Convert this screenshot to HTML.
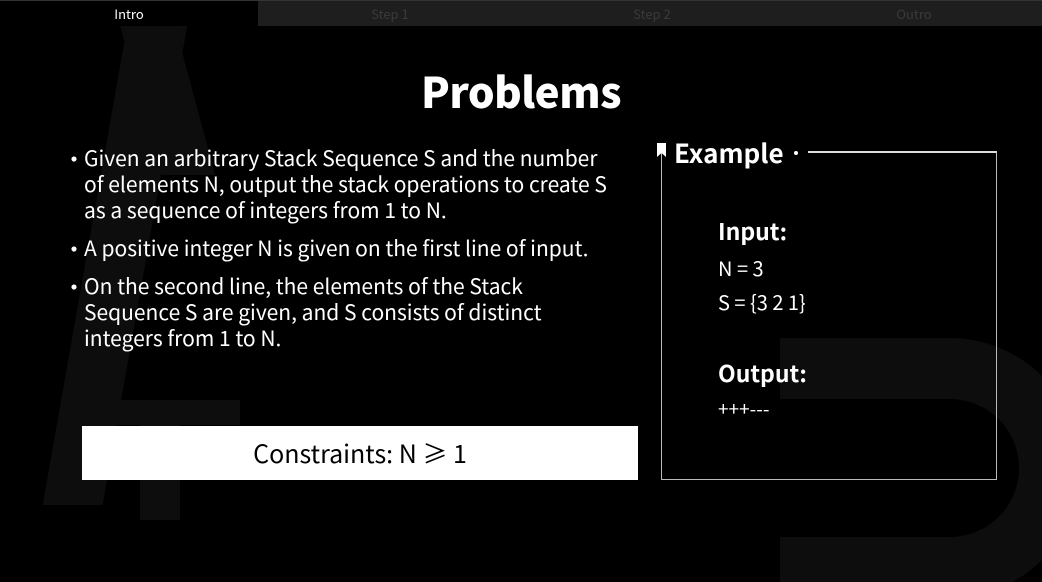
<!DOCTYPE html>
<html style="width:1042px;height:582px;overflow:hidden"><head><style>
*{margin:0;padding:0;box-sizing:border-box}
body{width:1042px;height:582px;background:#000;overflow:hidden;position:relative;font-family:"Liberation Sans","Noto Sans CJK SC",sans-serif;color:#fff}
.tabs{position:absolute;top:0;left:0;width:1042px;height:26px;background:#1e1e1e;border-top:1px solid #333}
.tab{position:absolute;top:0;height:25px;line-height:25px;font-size:13px;text-align:center;width:260px;color:#3a3a3a;font-family:"Noto Sans CJK SC",sans-serif}
.bg{position:absolute;background:#0d0d0d}
h1{position:absolute;top:60px;left:0;width:1042px;text-align:center;font-size:42px;font-weight:900;font-family:"Noto Sans CJK SC","Liberation Sans",sans-serif;letter-spacing:-0.5px}
ul{position:absolute;left:62px;top:145px;width:570px;list-style:none;font-family:"Noto Sans CJK SC",sans-serif;font-size:21px;line-height:26px}
li{position:relative;padding-left:22px;margin-bottom:12px}
li:before{content:"•";position:absolute;left:0;font-size:24px}
.cons{position:absolute;left:82px;top:426px;width:556px;height:54px;background:#fff;color:#000;text-align:center;line-height:54px;font-size:25px;font-family:"Noto Sans CJK SC",sans-serif}
.box{position:absolute;left:661px;top:151px;width:336px;height:329px;border:1.5px solid #bbb;border-top:none}
.ex{position:absolute;font-family:"Noto Sans CJK SC",sans-serif}
.clip{position:absolute;left:0;top:0;width:1042px;height:582px;overflow:hidden}
</style></head><body>
<div class="clip">
<div class="bg" style="top:25px;width:60px;height:480px;transform:skewX(-10deg);left:85px"></div>
<div class="bg" style="left:140px;top:25px;width:55px;height:150px;transform:skewX(15deg)"></div>
<div class="bg" style="left:65px;top:400px;width:175px;height:25px"></div>
<div class="bg" style="left:140px;top:420px;width:40px;height:100px"></div>
<div style="position:absolute;left:780px;top:338px;width:300px;height:260px;border:61px solid #0d0d0d;border-left:none;border-radius:0 130px 130px 0"></div>
</div>
<div class="tabs">
<div class="tab" style="left:0;width:258px;background:#000;color:#fff">Intro</div>
<div class="tab" style="left:260px">Step 1</div>
<div class="tab" style="left:522px">Step 2</div>
<div class="tab" style="left:784px">Outro</div>
</div>
<h1>Problems</h1>
<ul>
<li style="width:560px">Given an arbitrary Stack Sequence S and the number<br>of elements N, output the stack operations to create S<br>as a sequence of integers from 1 to N.</li>
<li>A positive integer N is given on the first line of input.</li>
<li style="width:500px">On the second line, the elements of the Stack<br>Sequence S are given, and S consists of distinct<br>integers from 1 to N.</li>
</ul>
<div class="cons">Constraints: N ≥ 1</div>
<div class="box"></div>
<div style="position:absolute;left:808px;top:151px;width:189px;height:1.5px;background:#ddd"></div>
<svg style="position:absolute;left:656px;top:142px" width="11" height="16"><path d="M1 1H10V15L5.5 11L1 15Z" fill="#fff"/></svg>
<div class="ex" style="left:674px;top:134px;font-size:26px;font-weight:bold">Example</div>
<div style="position:absolute;left:794px;top:151px;width:4px;height:4px;border-radius:2px;background:#fff"></div>
<div class="ex" style="left:718px;top:213px;font-size:23px;font-weight:bold">Input:</div>
<div class="ex" style="left:718px;top:253px;font-size:20px">N = 3</div>
<div class="ex" style="left:718px;top:287px;font-size:20px">S = {3 2 1}</div>
<div class="ex" style="left:718px;top:355px;font-size:23px;font-weight:bold">Output:</div>
<div class="ex" style="left:718px;top:395px;font-size:19px">+++---</div>
</body></html>
